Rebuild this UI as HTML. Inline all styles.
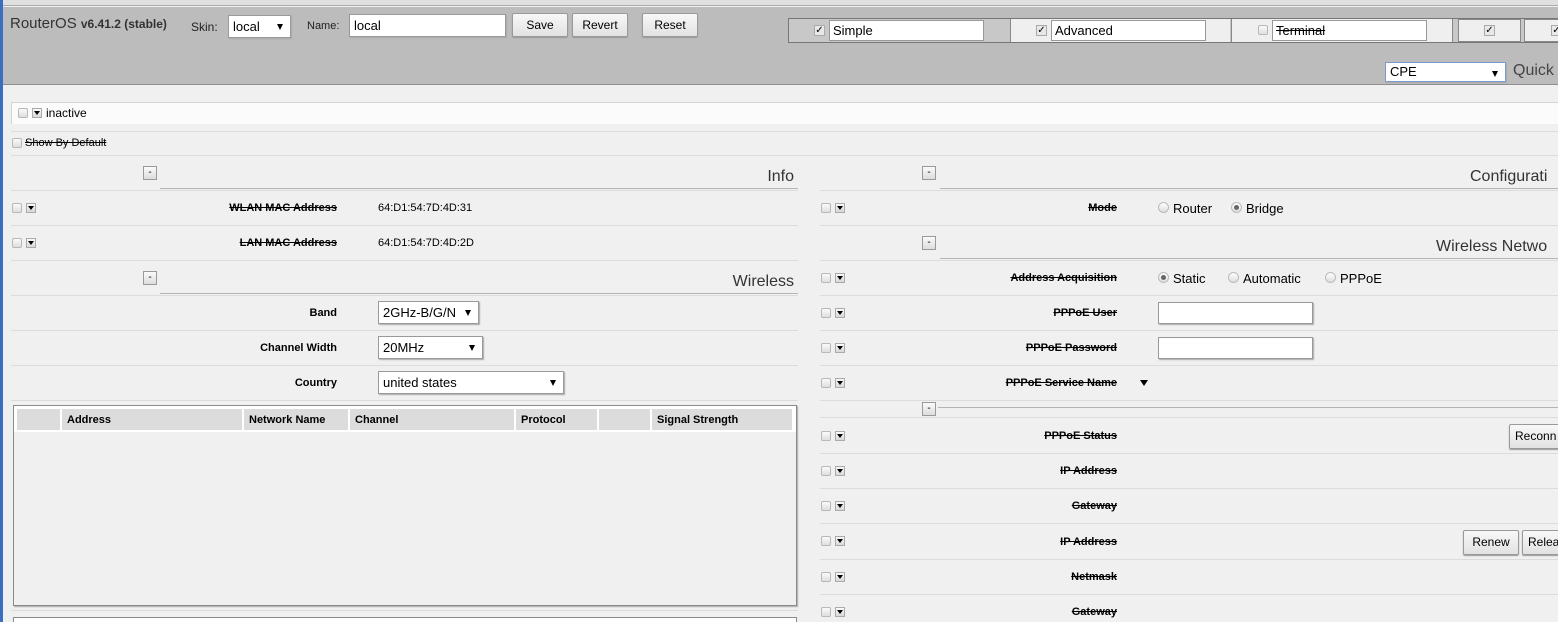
<!DOCTYPE html>
<html><head><meta charset="utf-8"><style>
*{box-sizing:border-box;margin:0;padding:0}
html,body{width:1558px;height:622px;overflow:hidden}
body{background:#f0f0f0;font-family:"Liberation Sans",sans-serif;font-size:12px;color:#000;position:relative}
.a{position:absolute}
.hl{position:absolute;height:1px;background:#dcdcdc}
.lbl{position:absolute;text-align:right;font-weight:bold;font-size:11px;white-space:nowrap}
.st{text-decoration:line-through}
.cb{position:absolute;width:10px;height:10px;border:1px solid #b8b8b8;border-radius:2px;background:linear-gradient(#fafafa,#dedede)}
.dd{position:absolute;width:10px;height:10px;border:1px solid #aaa;background:linear-gradient(#fafafa,#d8d8d8)}
.dd:after{content:"";position:absolute;left:1px;top:2px;border-left:3px solid transparent;border-right:3px solid transparent;border-top:4px solid #000}
.btn{position:absolute;border:1px solid #9a9a9a;border-radius:2px;background:linear-gradient(#f8f8f8,#e2e2e2);text-align:center;font-size:12px;box-shadow:0 1px 1px #999}
.mn{position:absolute;width:14px;height:14px;border:1px solid #999;background:linear-gradient(#fafafa,#dcdcdc);font-size:10px;text-align:center;line-height:11px}
.sec{position:absolute;height:1px;background:#b4b4b4}
.h{position:absolute;font-size:16px;color:#333;text-align:right;white-space:nowrap}
.sel{position:absolute;background:#fff;border:1px solid #9a9a9a;box-shadow:1px 1px 1px #aaa;padding-left:4px;font-size:13px}
.sel:after{content:"";position:absolute;right:7px;top:8px;border-left:3px solid transparent;border-right:3px solid transparent;border-top:6px solid #000}
.inp{position:absolute;background:#fff;border:1px solid #999;box-shadow:1px 1px 1px #aaa}
.rad{position:absolute;width:11px;height:11px;border:1px solid #bbb;border-radius:50%;background:linear-gradient(#fff,#ddd)}
.rad.on:after{content:"";position:absolute;left:2px;top:2px;width:5px;height:5px;border-radius:50%;background:#666}
.th{position:absolute;top:3px;height:21px;background:#dcdcdc;font-weight:bold;font-size:11px;padding:5px 0 0 5px}
.ck{position:absolute;width:11px;height:11px;border:1px solid #aaa;background:#e8e8e8;font-size:10px;line-height:9px;text-align:center}
</style></head><body>
<div class="a" style="left:0;top:0;width:3px;height:622px;background:#3a6fbf"></div>
<div class="a" style="left:3px;top:0;width:1555px;height:6px;background:#e0e0e0;border-bottom:1px solid #aaa"></div>
<div class="a" style="left:3px;top:7px;width:1555px;height:78px;background:#bcbcbc;border-bottom:1px solid #8f8f8f"></div>
<div class="a" style="left:10px;top:15px;font-size:15px;color:#333;white-space:nowrap">RouterOS <span style="font-size:12px;font-weight:bold;color:#333">v6.41.2 (stable)</span></div>
<div class="a" style="left:191px;top:20px;font-size:12px;color:#222">Skin:</div>
<div class="sel" style="left:228px;top:15px;width:63px;height:23px;line-height:21px">local</div>
<div class="a" style="left:307px;top:20px;font-size:11px;color:#222">Name:</div>
<div class="inp" style="left:349px;top:14px;width:157px;height:23px;padding:3px 4px;font-size:13px">local</div>
<div class="btn" style="left:512px;top:13px;width:56px;height:24px;line-height:22px">Save</div>
<div class="btn" style="left:572px;top:13px;width:56px;height:24px;line-height:22px">Revert</div>
<div class="btn" style="left:642px;top:13px;width:56px;height:24px;line-height:22px">Reset</div>
<!-- tabs -->
<div class="a" style="left:788px;top:18px;width:770px;height:25px;border:1px solid #777;background:#c8c8c8"></div>
<div class="a" style="left:789px;top:19px;width:219px;height:23px;background:#c8c8c8"></div>
<div class="a" style="left:1010px;top:19px;width:220px;height:23px;background:#efefef;border-left:1px solid #888"></div>
<div class="a" style="left:1231px;top:19px;width:222px;height:23px;background:#efefef;border-left:1px solid #888;border-right:1px solid #888"></div>
<div class="a" style="left:1458px;top:19px;width:63px;height:23px;background:#efefef;border:1px solid #888"></div>
<div class="a" style="left:1524px;top:19px;width:40px;height:23px;background:#efefef;border:1px solid #888"></div>
<div class="ck" style="left:814px;top:25px">✓</div>
<div class="inp" style="left:829px;top:20px;width:155px;height:21px;padding:2px 3px;font-size:13px;box-shadow:none">Simple</div>
<div class="ck" style="left:1036px;top:25px">✓</div>
<div class="inp" style="left:1051px;top:20px;width:155px;height:21px;padding:2px 3px;font-size:13px;box-shadow:none">Advanced</div>
<div class="cb" style="left:1258px;top:25px"></div>
<div class="inp" style="left:1272px;top:20px;width:155px;height:21px;padding:2px 3px;font-size:13px;box-shadow:none"><span class="st">Terminal</span></div>
<div class="ck" style="left:1484px;top:25px">✓</div>
<div class="ck" style="left:1551px;top:25px">✓</div>
<div class="sel" style="left:1385px;top:62px;width:121px;height:20px;line-height:18px;border-color:#7a9ad0">CPE</div>
<div class="a" style="left:1513px;top:62px;font-size:16px;color:#444">Quick</div>
<!-- inactive bar -->
<div class="a" style="left:11px;top:102px;width:1547px;height:22px;background:#fbfbfb;border-top:1px solid #d4d4d4;border-left:1px solid #d4d4d4"></div>
<div class="cb" style="left:18px;top:108px"></div>
<div class="dd" style="left:32px;top:108px"></div>
<div class="a" style="left:46px;top:106px;font-size:12px">inactive</div>
<div class="hl" style="left:11px;top:131px;width:1547px"></div>
<div class="cb" style="left:12px;top:138px"></div>
<div class="a st" style="left:25px;top:137px;font-size:11px">Show By Default</div>
<div class="hl" style="left:11px;top:155px;width:1547px"></div>

<!-- LEFT -->
<div class="mn" style="left:143px;top:166px">-</div>
<div class="sec" style="left:160px;top:188px;width:638px"></div>
<div class="h" style="left:600px;top:168px;width:194px">Info</div>
<div class="hl" style="left:11px;top:190px;width:787px"></div>
<div class="cb" style="left:12px;top:203px"></div><div class="dd" style="left:26px;top:203px"></div>
<div class="lbl st" style="left:100px;top:202px;width:237px">WLAN MAC Address</div>
<div class="a" style="left:378px;top:202px;font-size:11px">64:D1:54:7D:4D:31</div>
<div class="hl" style="left:11px;top:225px;width:787px"></div>
<div class="cb" style="left:12px;top:238px"></div><div class="dd" style="left:26px;top:238px"></div>
<div class="lbl st" style="left:100px;top:237px;width:237px">LAN MAC Address</div>
<div class="a" style="left:378px;top:237px;font-size:11px">64:D1:54:7D:4D:2D</div>
<div class="hl" style="left:11px;top:260px;width:787px"></div>
<div class="mn" style="left:143px;top:271px">-</div>
<div class="sec" style="left:160px;top:293px;width:638px"></div>
<div class="h" style="left:600px;top:273px;width:194px">Wireless</div>
<div class="hl" style="left:11px;top:295px;width:787px"></div>
<div class="lbl" style="left:100px;top:307px;width:237px">Band</div>
<div class="sel" style="left:378px;top:301px;width:101px;height:23px;line-height:21px">2GHz-B/G/N</div>
<div class="hl" style="left:11px;top:330px;width:787px"></div>
<div class="lbl" style="left:100px;top:342px;width:237px">Channel Width</div>
<div class="sel" style="left:378px;top:336px;width:105px;height:23px;line-height:21px">20MHz</div>
<div class="hl" style="left:11px;top:365px;width:787px"></div>
<div class="lbl" style="left:100px;top:377px;width:237px">Country</div>
<div class="sel" style="left:378px;top:371px;width:186px;height:23px;line-height:21px">united states</div>
<div class="hl" style="left:11px;top:400px;width:787px"></div>
<div class="a" style="left:13px;top:405px;width:784px;height:201px;border:1px solid #8a8a8a;box-shadow:1px 1px 1px #aaa;background:#f0f0f0">
<div class="a" style="left:0;top:0;width:782px;height:26px;background:#fff"></div>
<div class="th" style="left:3px;width:43px"></div>
<div class="th" style="left:48px;width:180px">Address</div>
<div class="th" style="left:230px;width:104px">Network Name</div>
<div class="th" style="left:336px;width:164px">Channel</div>
<div class="th" style="left:502px;width:81px">Protocol</div>
<div class="th" style="left:585px;width:51px"></div>
<div class="th" style="left:638px;width:140px">Signal Strength</div>
</div>
<div class="hl" style="left:11px;top:610px;width:787px"></div>
<div class="a" style="left:13px;top:617px;width:784px;height:5px;border:1px solid #8a8a8a;border-bottom:none;background:#fff"></div>

<!-- RIGHT -->
<div class="mn" style="left:922px;top:166px">-</div>
<div class="sec" style="left:940px;top:188px;width:618px"></div>
<div class="h" style="left:1470px;top:168px">Configurati</div>
<div class="hl" style="left:820px;top:190px;width:738px"></div>
<div class="cb" style="left:821px;top:203px"></div><div class="dd" style="left:835px;top:203px"></div>
<div class="lbl st" style="left:880px;top:202px;width:237px">Mode</div>
<div class="rad" style="left:1158px;top:202px"></div><div class="a" style="left:1173px;top:201px;font-size:13px">Router</div>
<div class="rad on" style="left:1231px;top:202px"></div><div class="a" style="left:1246px;top:201px;font-size:13px">Bridge</div>
<div class="hl" style="left:820px;top:225px;width:738px"></div>
<div class="mn" style="left:922px;top:236px">-</div>
<div class="sec" style="left:940px;top:258px;width:618px"></div>
<div class="h" style="left:1436px;top:238px;text-align:left">Wireless Netwo</div>
<div class="hl" style="left:820px;top:260px;width:738px"></div>
<div class="cb" style="left:821px;top:273px"></div><div class="dd" style="left:835px;top:273px"></div>
<div class="lbl st" style="left:880px;top:272px;width:237px">Address Acquisition</div>
<div class="rad on" style="left:1158px;top:272px"></div><div class="a" style="left:1173px;top:271px;font-size:13px">Static</div>
<div class="rad" style="left:1228px;top:272px"></div><div class="a" style="left:1243px;top:271px;font-size:13px">Automatic</div>
<div class="rad" style="left:1325px;top:272px"></div><div class="a" style="left:1340px;top:271px;font-size:13px">PPPoE</div>
<div class="hl" style="left:820px;top:295px;width:738px"></div>
<div class="cb" style="left:821px;top:308px"></div><div class="dd" style="left:835px;top:308px"></div>
<div class="lbl st" style="left:880px;top:307px;width:237px">PPPoE User</div>
<div class="inp" style="left:1158px;top:302px;width:155px;height:22px"></div>
<div class="hl" style="left:820px;top:330px;width:738px"></div>
<div class="cb" style="left:821px;top:343px"></div><div class="dd" style="left:835px;top:343px"></div>
<div class="lbl st" style="left:880px;top:342px;width:237px">PPPoE Password</div>
<div class="inp" style="left:1158px;top:337px;width:155px;height:22px"></div>
<div class="hl" style="left:820px;top:365px;width:738px"></div>
<div class="cb" style="left:821px;top:378px"></div><div class="dd" style="left:835px;top:378px"></div>
<div class="lbl st" style="left:880px;top:377px;width:237px">PPPoE Service Name</div>
<div class="a" style="left:1140px;top:380px;border-left:4px solid transparent;border-right:4px solid transparent;border-top:6px solid #000"></div>
<div class="hl" style="left:820px;top:400px;width:738px"></div>
<div class="mn" style="left:922px;top:402px">-</div>
<div class="sec" style="left:938px;top:407px;width:620px"></div>
<div class="hl" style="left:820px;top:417px;width:738px"></div>
<div class="cb" style="left:821px;top:431px"></div><div class="dd" style="left:835px;top:431px"></div>
<div class="lbl st" style="left:880px;top:430px;width:237px">PPPoE Status</div>
<div class="btn" style="left:1509px;top:424px;width:60px;height:25px;line-height:23px;text-align:left;padding-left:5px">Reconn</div>
<div class="hl" style="left:820px;top:453px;width:738px"></div>
<div class="cb" style="left:821px;top:466px"></div><div class="dd" style="left:835px;top:466px"></div>
<div class="lbl st" style="left:880px;top:465px;width:237px">IP Address</div>
<div class="hl" style="left:820px;top:488px;width:738px"></div>
<div class="cb" style="left:821px;top:501px"></div><div class="dd" style="left:835px;top:501px"></div>
<div class="lbl st" style="left:880px;top:500px;width:237px">Gateway</div>
<div class="hl" style="left:820px;top:523px;width:738px"></div>
<div class="cb" style="left:821px;top:536px"></div><div class="dd" style="left:835px;top:536px"></div>
<div class="lbl st" style="left:880px;top:536px;width:237px">IP Address</div>
<div class="btn" style="left:1463px;top:530px;width:56px;height:25px;line-height:23px">Renew</div>
<div class="btn" style="left:1522px;top:530px;width:50px;height:25px;line-height:23px;text-align:left;padding-left:5px">Relea</div>
<div class="hl" style="left:820px;top:559px;width:738px"></div>
<div class="cb" style="left:821px;top:572px"></div><div class="dd" style="left:835px;top:572px"></div>
<div class="lbl st" style="left:880px;top:571px;width:237px">Netmask</div>
<div class="hl" style="left:820px;top:594px;width:738px"></div>
<div class="cb" style="left:821px;top:607px"></div><div class="dd" style="left:835px;top:607px"></div>
<div class="lbl st" style="left:880px;top:606px;width:237px">Gateway</div>
</body></html>
